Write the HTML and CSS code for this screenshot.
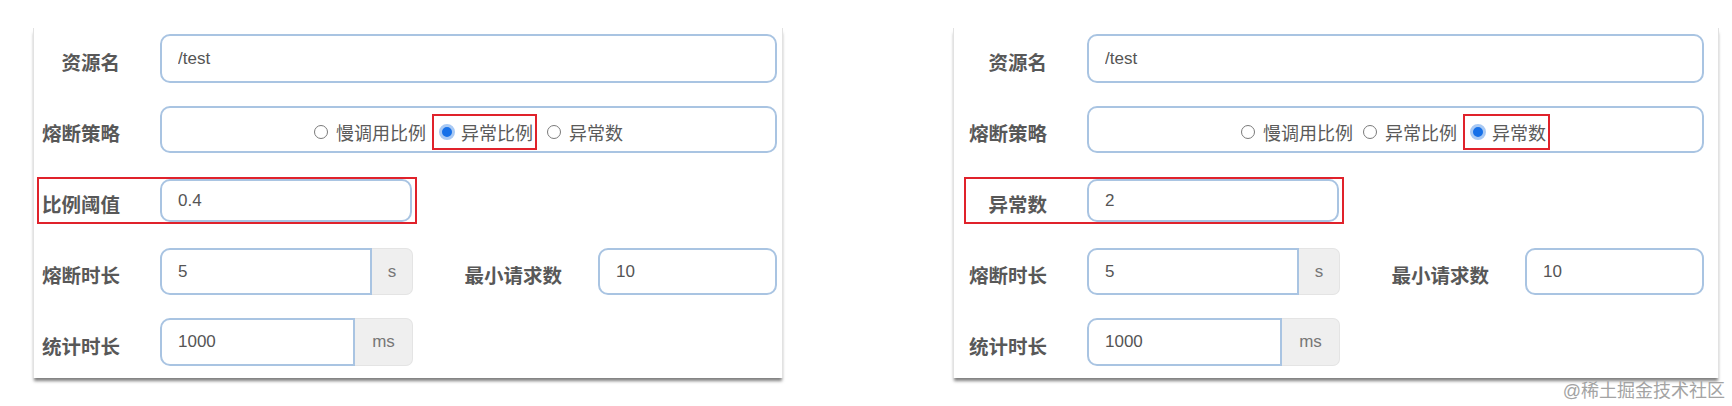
FILE: index.html
```html
<!DOCTYPE html>
<html lang="zh-CN">
<head>
  <meta charset="UTF-8">
  <title>熔断规则对比</title>
  <link rel="stylesheet" href="styles.css">
</head>
<body>
  <div class="shots">

    <div class="panel panel-left">
      <div class="row r1">
        <label class="name">资源名</label>
        <input class="box" type="text" value="/test">
      </div>
      <div class="row r2">
        <label class="name">熔断策略</label>
        <div class="box radios">
          <span class="opt"><i class="dot"></i>慢调用比例</span>
          <span class="opt picked"><i class="dot on"></i>异常比例</span>
          <span class="opt"><i class="dot"></i>异常数</span>
        </div>
      </div>
      <div class="row marked">
        <label class="name">比例阈值</label>
        <input class="box short" type="text" value="0.4">
      </div>
      <div class="row r4">
        <label class="name">熔断时长</label>
        <div class="group">
          <input class="box" type="text" value="5">
          <span class="addon">s</span>
        </div>
        <label class="name side">最小请求数</label>
        <input class="box" type="text" value="10">
      </div>
      <div class="row r5">
        <label class="name">统计时长</label>
        <div class="group wide-addon">
          <input class="box" type="text" value="1000">
          <span class="addon">ms</span>
        </div>
      </div>
    </div>

    <div class="panel panel-right">
      <div class="row r1">
        <label class="name">资源名</label>
        <input class="box" type="text" value="/test">
      </div>
      <div class="row r2">
        <label class="name">熔断策略</label>
        <div class="box radios">
          <span class="opt"><i class="dot"></i>慢调用比例</span>
          <span class="opt"><i class="dot"></i>异常比例</span>
          <span class="opt picked"><i class="dot on"></i>异常数</span>
        </div>
      </div>
      <div class="row marked">
        <label class="name">异常数</label>
        <input class="box short" type="text" value="2">
      </div>
      <div class="row r4">
        <label class="name">熔断时长</label>
        <div class="group">
          <input class="box" type="text" value="5">
          <span class="addon">s</span>
        </div>
        <label class="name side">最小请求数</label>
        <input class="box" type="text" value="10">
      </div>
      <div class="row r5">
        <label class="name">统计时长</label>
        <div class="group wide-addon">
          <input class="box" type="text" value="1000">
          <span class="addon">ms</span>
        </div>
      </div>
    </div>

  </div>
  <div class="credit">@稀土掘金技术社区</div>
</body>
</html>
```

FILE: styles.css
```css
body {
  margin: 0;
  background: #fff;
  font-family: "Liberation Sans", "Noto Sans CJK SC", sans-serif;
  color: #555;
}
.shots {
  display: flex;
  gap: 170px;
  padding: 28px 0 0 33px;
}
.panel {
  box-sizing: border-box;
  width: 750px;
  padding: 6px 5px 12px 0;
  background: #fff;
  border-left: 1px solid #e2e2e2;
  border-right: 1px solid #e2e2e2;
  box-shadow: 0 4px 3px -1px rgba(0, 0, 0, .5);
  display: flex;
  flex-direction: column;
  gap: 23px;
}
.panel-right {
  width: 766px;
  padding-left: 7px;
  padding-right: 14px;
}
.row {
  display: flex;
  align-items: center;
  gap: 40px;
  height: 48px;
}
.row.r1 { height: 49px; }
.row.r2 { height: 47px; }
.row.r4 { height: 47px; margin-top: 1px; }
.name {
  flex: none;
  width: 86px;
  padding-top: 6px;
  text-align: right;
  font-size: 19.5px;
  font-weight: bold;
  color: #585858;
  white-space: nowrap;
}
.name.side {
  width: 100px;
  margin-left: 9px;
  margin-right: -4px;
}
.box {
  box-sizing: border-box;
  flex: 1;
  min-width: 0;
  height: 100%;
  margin: 0;
  padding: 0 16px;
  border: 2px solid #a9c4e2;
  border-radius: 10px;
  background: #fff;
  font: 17px "Liberation Sans", "Noto Sans CJK SC", sans-serif;
  color: #555;
  outline: none;
}
.radios {
  display: flex;
  align-items: center;
  justify-content: center;
  gap: 6px;
  padding-top: 4px;
  font-size: 18px;
  color: #5a5a5a;
}
.opt {
  display: inline-flex;
  align-items: center;
  gap: 8px;
  white-space: nowrap;
}
.opt + .opt:not(.picked) {
  margin-left: 4px;
}
.opt.picked {
  box-sizing: border-box;
  height: 36px;
  gap: 6px;
  padding: 0 2px 0 5px;
  border: 2px solid #e0222b;
}
.dot {
  box-sizing: border-box;
  width: 14px;
  height: 14px;
  border: 1.5px solid #7a7a7a;
  border-radius: 50%;
  background: #fff;
}
.dot.on {
  width: 16px;
  height: 16px;
  border: 3px solid #a8c9f4;
  background: #1670e8;
}
.row.marked {
  box-sizing: border-box;
  align-self: flex-start;
  height: 47px;
  margin-top: 1px;
  margin-left: 3px;
  padding-right: 3px;
  border: 2px solid #e0222b;
}
.marked .name {
  width: 81px;
}
.box.short {
  flex: none;
  width: 252px;
}
.group {
  flex: none;
  display: flex;
  width: 253px;
  height: 100%;
}
.group .box {
  border-radius: 10px 0 0 10px;
}
.addon {
  box-sizing: border-box;
  flex: none;
  width: 41px;
  display: flex;
  align-items: center;
  justify-content: center;
  background: #efefef;
  border: 1px solid #e4e4e4;
  border-left: none;
  border-radius: 0 7px 7px 0;
  font-size: 17px;
  color: #777;
}
.wide-addon .addon {
  width: 58px;
}
.credit {
  margin-top: 1px;
  padding-right: 7px;
  text-align: right;
  font-size: 18px;
  line-height: 24px;
  color: #a3a3a3;
}
```
